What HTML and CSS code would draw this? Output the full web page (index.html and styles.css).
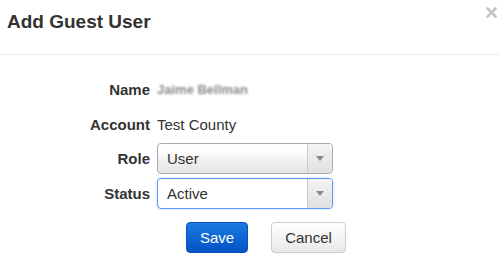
FILE: index.html
```html
<!DOCTYPE html>
<html>
<head>
<meta charset="utf-8">
<link rel="stylesheet" href="styles.css">
</head>
<body>
<div class="modal">
  <div class="modal-header">
    <h3 class="title">Add Guest User</h3>
    <svg class="close" width="11" height="11" viewBox="0 0 11 11"><path d="M1.5 1.5 L9.5 9.5 M9.5 1.5 L1.5 9.5" stroke="#c4c4c4" stroke-width="2.6" stroke-linecap="square"/></svg>
  </div>
  <div class="modal-body">
    <div class="row row-name">
      <div class="label">Name</div>
      <div class="value blurred">Jaime Bellman</div>
    </div>
    <div class="row row-account">
      <div class="label">Account</div>
      <div class="value">Test County</div>
    </div>
    <div class="row row-role">
      <div class="label">Role</div>
      <div class="select">
        <span class="select-text">User</span>
        <span class="select-arrow"><span class="tri"></span></span>
      </div>
    </div>
    <div class="row row-status">
      <div class="label">Status</div>
      <div class="select focused">
        <span class="select-text">Active</span>
        <span class="select-arrow"><span class="tri"></span></span>
      </div>
    </div>
    <div class="actions">
      <button class="btn btn-primary">Save</button>
      <button class="btn btn-default">Cancel</button>
    </div>
  </div>
</div>
</body>
</html>
```
FILE: styles.css
```css
html, body {
  margin: 0;
  padding: 0;
  background: #fff;
  font-family: "Liberation Sans", Arial, sans-serif;
  color: #333;
}
.modal {
  width: 500px;
  height: 267px;
  position: relative;
}
.modal-header {
  height: 54px;
  border-bottom: 1px solid #ebebeb;
  display: flex;
  align-items: flex-start;
  position: relative;
}
.title {
  margin: 0;
  padding: 10px 0 0 7px;
  font-size: 19px;
  font-weight: bold;
  line-height: 24px;
  color: #333;
}
.close {
  position: absolute;
  right: 3px;
  top: 7px;
}
.modal-body {
  padding-top: 17px;
}
.row {
  display: flex;
  align-items: center;
}
.label {
  width: 157px;
  flex: none;
  text-align: right;
  font-weight: bold;
  font-size: 15px;
  color: #333;
  padding-right: 7px;
  box-sizing: border-box;
}
.value {
  font-size: 15px;
  color: #333;
}
.blurred {
  color: #8a8a8a;
  filter: blur(1.3px);
  font-size: 13px;
  font-weight: bold;
}
.row-name { height: 34px; }
.row-account { height: 34px; margin-top: 1px; }
.row-role { margin-top: 2px; }
.row-status { margin-top: 4px; }
.select {
  width: 176px;
  height: 31px;
  box-sizing: border-box;
  border: 1px solid #aaa;
  border-radius: 4px;
  background: linear-gradient(#ffffff 20%, #f0f0f0 60%, #e4e4e4 100%);
  display: flex;
  align-items: center;
  overflow: hidden;
}
.select.focused {
  border-color: #5897fb;
  background: #fff;
  box-shadow: 0 0 3px rgba(88,151,251,0.35);
}
.select-text {
  flex: 1;
  padding-left: 9px;
  font-size: 15px;
  color: #333;
}
.select-arrow {
  width: 24px;
  height: 100%;
  border-left: 1px solid #ccc;
  background: linear-gradient(#f4f4f4, #e0e0e0);
  display: flex;
  align-items: center;
  justify-content: center;
}
.tri {
  width: 0;
  height: 0;
  border-left: 4px solid transparent;
  border-right: 4px solid transparent;
  border-top: 5px solid #888;
}
.actions {
  display: flex;
  gap: 23px;
  margin-top: 13px;
  padding-left: 186px;
}
.btn {
  height: 31px;
  border-radius: 4px;
  font-family: "Liberation Sans", Arial, sans-serif;
  font-size: 15px;
  padding: 0;
  box-sizing: border-box;
}
.btn-primary {
  width: 62px;
  color: #fff;
  border: 1px solid #0850b8;
  background: linear-gradient(#1a7be0, #0552c4);
}
.btn-default {
  width: 75px;
  color: #333;
  border: 1px solid #ccc;
  background: linear-gradient(#ffffff, #e8e8e8);
}
```
